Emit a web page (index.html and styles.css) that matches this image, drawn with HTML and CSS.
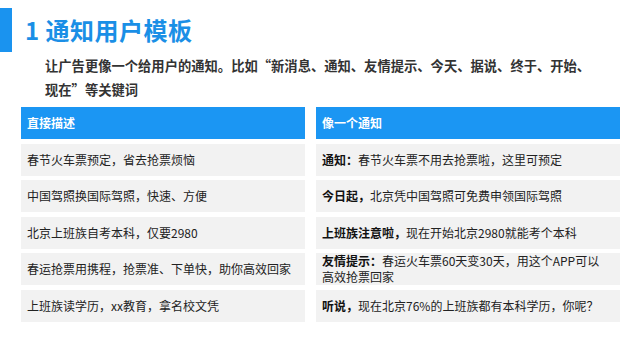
FILE: index.html
```html
<!DOCTYPE html>
<html lang="zh-CN">
<head>
<meta charset="utf-8">
<title>通知用户模板</title>
<link rel="stylesheet" href="styles.css">
</head>
<body>
<div class="page">
  <div class="head">
    <div class="bar"></div>
    <h1 class="title">1 通知用户模板</h1>
  </div>
  <p class="intro">让广告更像一个给用户的通知。比如“新消息、通知、友情提示、今天、据说、终于、开始、<br>现在”等关键词</p>
  <div class="table">
    <div class="cell th">直接描述</div>
    <div class="cell th">像一个通知</div>
    <div class="cell">春节火车票预定，省去抢票烦恼</div>
    <div class="cell"><span><b>通知：</b>春节火车票不用去抢票啦，这里可预定</span></div>
    <div class="cell">中国驾照换国际驾照，快速、方便</div>
    <div class="cell"><span><b>今日起，</b>北京凭中国驾照可免费申领国际驾照</span></div>
    <div class="cell">北京上班族自考本科，仅要2980</div>
    <div class="cell"><span><b>上班族注意啦，</b>现在开始北京2980就能考个本科</span></div>
    <div class="cell">春运抢票用携程，抢票准、下单快，助你高效回家</div>
    <div class="cell"><span><b>友情提示：</b>春运火车票60天变30天，用这个APP可以<br>高效抢票回家</span></div>
    <div class="cell">上班族读学历，xx教育，拿名校文凭</div>
    <div class="cell"><span><b>听说，</b>现在北京76%的上班族都有本科学历，你呢？</span></div>
  </div>
</div>
</body>
</html>
```

FILE: styles.css
```css
html, body {
  margin: 0;
  padding: 0;
  background: #ffffff;
}
body {
  font-family: "Noto Sans CJK SC", "Noto Sans", "Liberation Sans", sans-serif;
  color: #222222;
}
.page {
  width: 640px;
  height: 359px;
  padding-top: 8px;
  box-sizing: border-box;
  overflow: hidden;
}
.head {
  display: flex;
  align-items: center;
  gap: 13px;
}
.bar {
  width: 12px;
  height: 44px;
  background: #1a93ef;
}
.title {
  margin: 0;
  font-size: 24px;
  line-height: 32px;
  font-weight: 700;
  color: #1a8fe6;
  letter-spacing: 0.5px;
}
.intro {
  margin: 2px 0 0 45px;
  font-size: 13.3px;
  line-height: 24px;
  font-weight: 700;
  color: #333333;
}
.table {
  margin: 5px 0 0 21px;
  display: grid;
  grid-template-columns: 284px 304px;
  grid-auto-rows: 32px;
  column-gap: 11px;
  row-gap: 4.5px;
}
.cell {
  display: flex;
  align-items: center;
  padding: 0 6px;
  background: #f2f2f2;
  font-size: 12px;
  line-height: 16px;
  color: #222222;
}
.cell b {
  font-weight: 700;
  color: #111111;
}
.th {
  background: #1b96f3;
  color: #ffffff;
  font-weight: 700;
}
```
